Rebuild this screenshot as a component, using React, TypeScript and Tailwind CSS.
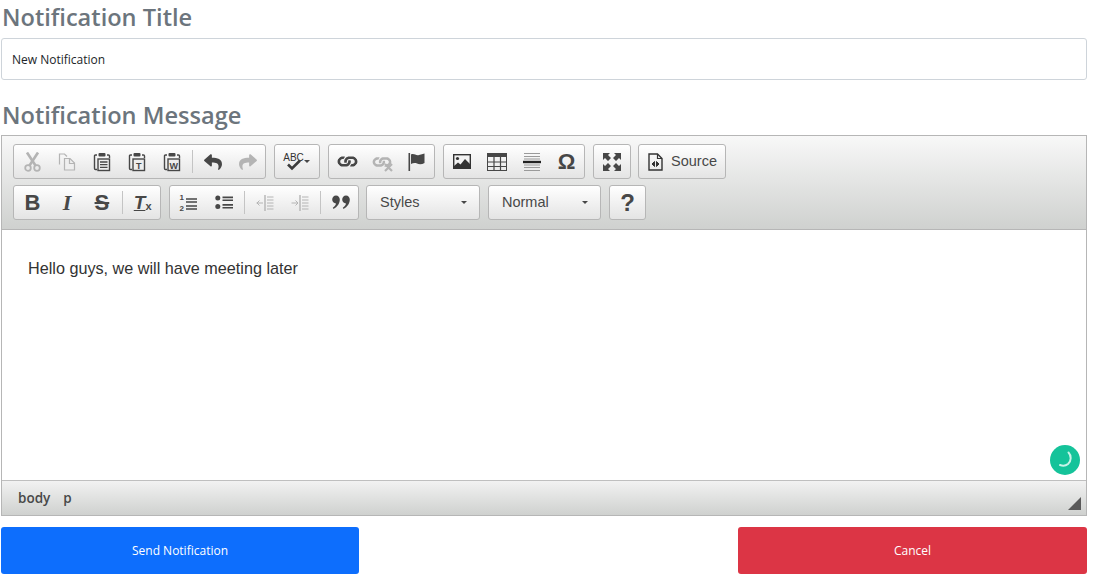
import type { ReactNode } from 'react';
import { FaLink, FaReply, FaShare } from 'react-icons/fa';

const dark = '#474747';
const faded = '#b4b4b4';

function ScissorsIcon() {
  return (
    <svg width="17" height="20" viewBox="0 0 17 20" fill="none" stroke={faded}>
      <path d="M3 0.5L11.5 13.5" strokeWidth="2.6" />
      <path d="M14 0.5L5.5 13.5" strokeWidth="2.6" />
      <circle cx="4" cy="16" r="2.8" strokeWidth="1.8" />
      <circle cx="13" cy="16" r="2.8" strokeWidth="1.8" />
    </svg>
  );
}

function Clipboard({ letter }: { letter?: string }) {
  return (
    <svg width="18" height="20" viewBox="0 0 18 20" fill="none">
      <path d="M4 3H2.5C1.8 3 1.5 3.5 1.5 4V16.5C1.5 17.2 2 17.5 2.5 17.5H4" stroke={dark} strokeWidth="1.4" />
      <path d="M14 3H15.5C16.2 3 16.5 3.5 16.5 4V6" stroke={dark} strokeWidth="1.4" />
      <rect x="5.5" y="1" width="7" height="3.5" rx="1" fill={dark} />
      <rect x="5" y="7" width="11.5" height="11.5" fill="#eee" stroke={dark} strokeWidth="1.4" />
      {letter ? (
        <text x="10.8" y="16.5" textAnchor="middle" fontSize="9" fontWeight="700" fontFamily="Liberation Sans, sans-serif" fill={dark}>
          {letter}
        </text>
      ) : (
        <path d="M7 10H14.5M7 12.7H14.5M7 15.4H14.5" stroke={dark} strokeWidth="1.3" />
      )}
    </svg>
  );
}

function CopyIcon() {
  return (
    <svg width="18" height="18" viewBox="0 0 18 18" fill="none" stroke={faded} strokeWidth="1.2">
      <path d="M1.5 11.5V1H6.5L9 3.5" />
      <path d="M6.5 5.5H12L16.5 10V17H6.5Z" fill="#efefef" />
      <path d="M11.5 5.5V10.5H16.5" />
    </svg>
  );
}

function Spell() {
  return (
    <span className="relative flex h-[20px] w-[19px] justify-center">
      <span className="font-['Liberation_Sans',sans-serif] text-[10px] leading-[11px] text-[#333]">ABC</span>
      <svg className="absolute top-[7px] left-[2px]" width="16" height="12" viewBox="0 0 16 12" fill="none">
        <path d="M2 5.5L6 9.5L14 1.5" stroke="#3c3c3c" strokeWidth="2.6" />
      </svg>
    </span>
  );
}

function Caret() {
  return <span className="h-0 w-0 border-x-[3px] border-t-[3px] border-x-transparent border-t-[#474747]" />;
}

function Unlink() {
  return (
    <span className="relative flex">
      <FaLink className="rotate-[45deg]" size={16} color={faded} />
      <svg className="absolute top-[9px] left-[10px]" width="9" height="9" viewBox="0 0 9 9">
        <path d="M1 1L8 8M8 1L1 8" stroke={faded} strokeWidth="2.2" />
      </svg>
    </span>
  );
}

function FlagIcon() {
  return (
    <svg width="17" height="18" viewBox="0 0 17 18">
      <rect x="0.5" y="0" width="1.6" height="18" fill={dark} />
      <path d="M3 1.5C6 0 8 3 11 2C13 1.5 15 1 16.5 0.5V10C14 11.5 11 11.5 9 10.5C7 9.7 5 10 3 11Z" fill={dark} />
    </svg>
  );
}

function ImageIcon() {
  return (
    <svg width="18" height="15" viewBox="0 0 18 15">
      <rect x="0.7" y="0.7" width="16.6" height="13.6" fill="#f2f2f2" stroke="#333" strokeWidth="1.4" />
      <circle cx="4.5" cy="4.5" r="1.6" fill="#333" />
      <path d="M1 14V12L5 8.5L7.5 10.5L12 5L17 10V14Z" fill="#333" />
    </svg>
  );
}

function TableIcon() {
  return (
    <svg width="20" height="18" viewBox="0 0 20 18" fill="none">
      <rect x="0.5" y="0.5" width="19" height="17" stroke={dark} />
      <rect x="0" y="0" width="20" height="4" fill={dark} />
      <path d="M0 9H20M0 13.5H20M7 4V18M13.5 4V18" stroke={dark} strokeWidth="1.2" />
    </svg>
  );
}

function HLine() {
  return (
    <svg width="18" height="20" viewBox="0 0 18 20" fill="none">
      <path d="M1 1.5H17M1 4.5H17M1 7H17M1 13H17M1 15.5H17M1 18.5H17" stroke="#9a9a9a" strokeWidth="1" />
      <rect x="0" y="8.8" width="18" height="2.4" fill="#222" />
    </svg>
  );
}

function Maximize() {
  return (
    <svg width="18" height="18" viewBox="0 0 18 18" fill={dark}>
      <path d="M0 0H7L5 2L8 5L5 8L2 5L0 7Z" />
      <path d="M18 0H11L13 2L10 5L13 8L16 5L18 7Z" />
      <path d="M0 18H7L5 16L8 13L5 10L2 13L0 11Z" />
      <path d="M18 18H11L13 16L10 13L13 10L16 13L18 11Z" />
    </svg>
  );
}

function SourceIcon() {
  return (
    <svg width="15" height="18" viewBox="0 0 15 18" fill="none">
      <path d="M1 1H9.5L14 5.5V17H1Z" stroke="#333" strokeWidth="1.4" />
      <path d="M9.5 1V5.5H14" stroke="#333" strokeWidth="1.2" />
      <path d="M6.5 8.5L4 11L6.5 13.5Z M8.5 8.5L11 11L8.5 13.5Z" fill="#333" stroke="#333" />
    </svg>
  );
}

function ListNum() {
  return (
    <span className="flex h-[22px] w-[18px] items-center gap-[2px]">
      <span className="flex flex-col font-['Liberation_Sans',sans-serif] text-[8px] leading-[11px] font-bold text-[#474747]">
        <span>1</span>
        <span>2</span>
      </span>
      <svg width="11" height="14" viewBox="0 0 11 14">
        <path d="M0 3H11M0 6H11M0 10H11M0 13H11" stroke={dark} strokeWidth="1.5" />
      </svg>
    </span>
  );
}

function ListBullet() {
  return (
    <svg width="18" height="15" viewBox="0 0 18 15" fill={dark}>
      <circle cx="2.8" cy="3" r="2.5" />
      <circle cx="2.8" cy="11.5" r="2.5" />
      <path d="M7.5 1.5H18V3.2H7.5ZM7.5 4.5H18V6H7.5ZM7.5 9H18V10.7H7.5ZM7.5 12H18V13.5H7.5Z" />
    </svg>
  );
}

function Indent({ out }: { out?: boolean }) {
  return (
    <svg width="18" height="16" viewBox="0 0 18 16" fill="none" stroke={faded} strokeWidth="1">
      <path d="M9 0V16" strokeWidth="1.4" />
      {out ? <path d="M0.5 8H7M3.5 5.5L1 8L3.5 10.5" /> : <path d="M0.5 8H7M4.5 5.5L7 8L4.5 10.5" />}
      <path d="M11 2H17.5M11 5H17.5M11 8H17.5M11 11H17.5M11 14H17.5" />
    </svg>
  );
}

function QuoteIcon() {
  return (
    <svg width="18" height="15" viewBox="0 0 18 15" fill={dark}>
      <path d="M4 0.5C6.2 0.5 7.8 2.2 7.8 4.6C7.8 8.5 5.3 12 1.6 14L0.8 12.8C2.6 11.4 3.7 10 4 8.4C1.8 8.4 0.2 6.8 0.2 4.5C0.2 2.2 1.8 0.5 4 0.5Z" />
      <path d="M14 0.5C16.2 0.5 17.8 2.2 17.8 4.6C17.8 8.5 15.3 12 11.6 14L10.8 12.8C12.6 11.4 13.7 10 14 8.4C11.8 8.4 10.2 6.8 10.2 4.5C10.2 2.2 11.8 0.5 14 0.5Z" />
    </svg>
  );
}

function Btn({ children, w = 'w-[35px]' }: { children: ReactNode; w?: string }) {
  return <div className={`flex h-full ${w} items-center justify-center`}>{children}</div>;
}

function Sep() {
  return (
    <div className="flex h-full w-[6px] items-center justify-center">
      <span className="h-[23px] w-px bg-[#c4c4c4]" />
    </div>
  );
}

function Group({ children, className = 'pl-px' }: { children: ReactNode; className?: string }) {
  return (
    <div className={`flex h-[35px] items-center rounded-[3px] border border-[#b6b6b6] bg-gradient-to-b from-[#ffffff] to-[#e4e4e4] ${className}`}>
      {children}
    </div>
  );
}

function Combo({ label, w }: { label: string; w: string }) {
  return (
    <Group className={`${w} justify-between pr-[12px] pl-[13px]`}>
      <span className="font-['Liberation_Sans',sans-serif] text-[14.5px] text-[#484848]">{label}</span>
      <Caret />
    </Group>
  );
}

function Toolbar() {
  return (
    <div className="flex h-[94px] flex-col gap-[6px] border-b border-[#b6b6b6] bg-gradient-to-b from-[#f8f8f8] to-[#cfd1cf] pt-[8px] pl-[11px]">
      <div className="flex gap-[8px]">
        <Group className="w-[253px] pl-px">
          <Btn><ScissorsIcon /></Btn>
          <Btn><CopyIcon /></Btn>
          <Btn><Clipboard /></Btn>
          <Btn><Clipboard letter="T" /></Btn>
          <Btn><Clipboard letter="W" /></Btn>
          <Sep />
          <Btn><FaReply size={18} color={dark} /></Btn>
          <Btn><FaShare size={18} color={faded} /></Btn>
        </Group>
        <Group className="w-[46px] justify-center gap-[1px]">
          <Spell />
          <Caret />
        </Group>
        <Group className="w-[107px] pl-px">
          <Btn><FaLink className="rotate-[45deg]" size={17} color={dark} /></Btn>
          <Btn><Unlink /></Btn>
          <Btn><FlagIcon /></Btn>
        </Group>
        <Group className="w-[142px] pl-px">
          <Btn><ImageIcon /></Btn>
          <Btn><TableIcon /></Btn>
          <Btn><HLine /></Btn>
          <Btn><span className="font-['Liberation_Sans',sans-serif] text-[22px] leading-none font-bold text-[#474747]">Ω</span></Btn>
        </Group>
        <Group className="w-[38px] justify-center">
          <Maximize />
        </Group>
        <Group className="-ml-px w-[88px] gap-[8px] pl-[9px]">
          <SourceIcon />
          <span className="font-['Liberation_Sans',sans-serif] text-[14.5px] text-[#484848]">Source</span>
        </Group>
      </div>
      <div className="flex gap-[8px]">
        <Group className="w-[148px] pl-px">
          <Btn><span className="font-['Liberation_Sans',sans-serif] text-[22px] leading-none font-bold text-[#474747]">B</span></Btn>
          <Btn><span className="font-['Liberation_Serif',serif] text-[22px] leading-none font-bold text-[#474747] italic">I</span></Btn>
          <Btn><span className="font-['Liberation_Sans',sans-serif] text-[22px] leading-none font-bold text-[#474747] line-through decoration-2">S</span></Btn>
          <Sep />
          <Btn>
            <span className="relative flex items-end font-['Liberation_Sans',sans-serif] font-bold text-[#474747]">
              <span className="text-[19px] leading-none underline italic">T</span>
              <span className="text-[11px] leading-none">x</span>
            </span>
          </Btn>
        </Group>
        <Group className="w-[190px] pl-px">
          <Btn><ListNum /></Btn>
          <Btn><ListBullet /></Btn>
          <Sep />
          <Btn><Indent out /></Btn>
          <Btn><Indent /></Btn>
          <Sep />
          <Btn><QuoteIcon /></Btn>
        </Group>
        <Combo label="Styles" w="w-[114px] -ml-px" />
        <Combo label="Normal" w="w-[113px]" />
        <Group className="w-[37px] justify-center">
          <span className="font-['Liberation_Sans',sans-serif] text-[24px] leading-none font-bold text-[#474747]">?</span>
        </Group>
      </div>
    </div>
  );
}

function Spinner() {
  return (
    <div className="absolute right-[6px] bottom-[5px] flex h-[30px] w-[30px] items-center justify-center rounded-full bg-[#15c39a]">
      <svg width="20" height="20" viewBox="0 0 20 20" fill="none">
        <path d="M13.5 2.5C16.5 5.5 16.5 11 13 14C10.5 16 7.5 16 5 15" stroke="#c9f3e8" strokeWidth="2" strokeLinecap="round" />
      </svg>
    </div>
  );
}

export default function App() {
  return (
    <div className="h-[577px] w-[1093px] overflow-hidden bg-white pr-[6px] pl-px font-['Open_Sans',sans-serif]">
      <h2 className="h-[38px] pl-px text-[23.6px] leading-[34px] font-semibold text-[#6c757d]">Notification Title</h2>
      <div className="flex h-[42px] items-center rounded-[3px] border border-[#ced4da] bg-white pt-px pl-[10px] text-[12px] text-[#212529]">
        New Notification
      </div>
      <h2 className="mt-[18px] h-[37px] pl-px text-[23.6px] leading-[35px] font-semibold text-[#6c757d]">Notification Message</h2>
      <div className="flex h-[381px] flex-col border border-[#b6b6b6]">
        <Toolbar />
        <div className="relative flex-1 bg-white pt-[28px] pl-[26px] font-['Liberation_Sans',sans-serif] text-[16.2px] leading-[20px] text-[#333]">
          Hello guys, we will have meeting later
          <Spinner />
        </div>
        <div className="relative flex h-[35px] items-center gap-[13px] border-t border-[#bfbfbf] bg-gradient-to-b from-[#f2f2f2] to-[#cfd1cf] pl-[16px] text-[13.5px] font-semibold text-[#484848]">
          <span>body</span>
          <span>p</span>
          <span className="absolute right-[5px] bottom-[5px] h-0 w-0 border-b-[13px] border-l-[13px] border-b-[#595959] border-l-transparent" />
        </div>
      </div>
      <div className="mt-[11px] flex justify-between">
        <button className="flex h-[47px] w-[358px] items-center justify-center rounded-[3px] bg-[#0d6efd] pt-px text-[12px] text-white">
          Send Notification
        </button>
        <button className="flex h-[47px] w-[349px] items-center justify-center rounded-[3px] bg-[#dc3545] pt-px text-[12px] text-white">
          Cancel
        </button>
      </div>
    </div>
  );
}
